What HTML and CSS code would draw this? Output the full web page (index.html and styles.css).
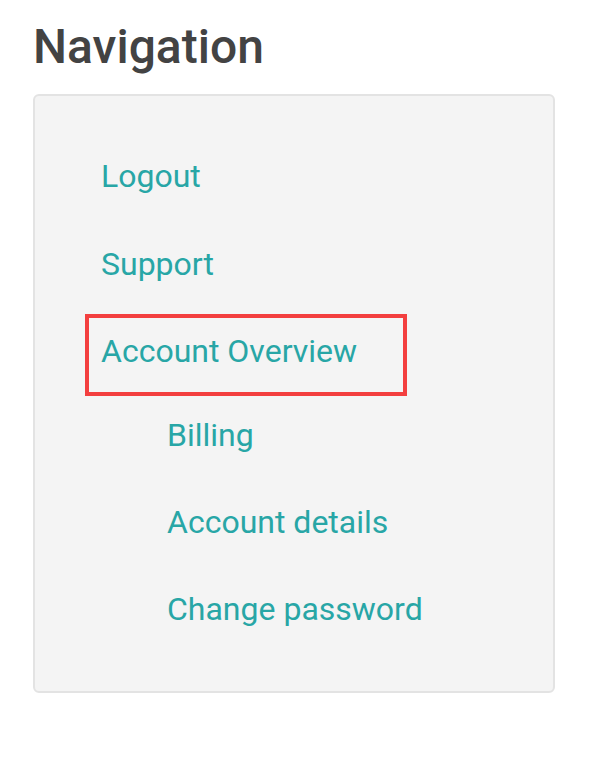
FILE: index.html
```html
<!DOCTYPE html>
<html>
<head>
<meta charset="utf-8">
<link rel="stylesheet" href="styles.css">
</head>
<body>
<h2 class="title">Navigation</h2>
<nav class="panel">
  <ul class="menu">
    <li class="item"><a class="link" href="#">Logout</a></li>
    <li class="item"><a class="link" href="#">Support</a></li>
    <li class="item group">
      <a class="link active" href="#">Account Overview</a>
      <ul class="submenu">
        <li class="subitem"><a class="link" href="#">Billing</a></li>
        <li class="subitem"><a class="link" href="#">Account details</a></li>
        <li class="subitem"><a class="link" href="#">Change password</a></li>
      </ul>
    </li>
  </ul>
</nav>
</body>
</html>
```
FILE: styles.css
```css
html, body { margin: 0; padding: 0; background: #fff; }
body {
  font-family: Roboto, "Liberation Sans", sans-serif;
  padding: 19px 57px 0 33px;
}
.title {
  margin: 0 0 19px;
  font-size: 48px;
  font-weight: 500;
  color: #434343;
  line-height: 56px;
}
.panel {
  background: #f4f4f4;
  border: 2px solid #e3e3e3;
  border-radius: 6px;
  padding: 60px 0 62px 66px;
}
.menu, .submenu { list-style: none; margin: 0; padding: 0; }
.item + .item { margin-top: 48px; }
.item.group { margin-top: 34px; }
.link {
  display: inline-block;
  vertical-align: top;
  color: #28a6a6;
  text-decoration: none;
  font-size: 32px;
  line-height: 40px;
}
.active {
  outline: 4px solid #f33f3f;
  padding: 13px 46px 21px 12px;
  margin-left: -12px;
}
.submenu { padding-left: 66px; margin-top: 23px; }
.subitem + .subitem { margin-top: 47px; }
```
